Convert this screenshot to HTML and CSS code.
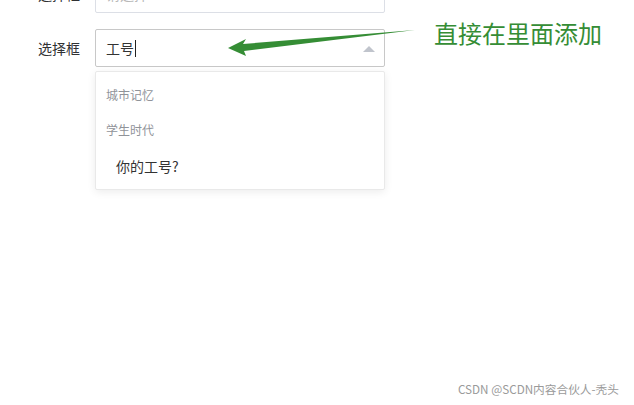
FILE: index.html
```html
<!DOCTYPE html>
<html lang="zh-CN">
<head>
  <meta charset="UTF-8" />
  <title>选择框</title>
  <link rel="stylesheet" href="styles.css">
</head>
<body>
  <div class="form">
    <div class="form-item">
      <label class="form-label">选择框</label>
      <div class="select">
        <div class="select-input">
          <span class="placeholder">请选择</span>
        </div>
      </div>
    </div>

    <div class="form-item">
      <label class="form-label">选择框</label>
      <div class="select">
        <div class="select-input is-focus">
          <span class="value">工号</span><span class="cursor"></span>
          <span class="caret"></span>
        </div>

        <!-- dropdown -->
        <div class="dropdown">
          <div class="group">
            <div class="group-title">城市记忆</div>
          </div>
          <div class="group last">
            <div class="group-title">学生时代</div>
          </div>
          <div class="option">你的工号?</div>
        </div>
      </div>
    </div>
  </div>

  <div class="note">直接在里面添加</div>
  <svg class="arrow" width="634" height="405" viewBox="0 0 634 405">
    <polygon points="228,48 246,39 243,44 415,30 244,51 246,56" fill="#358d35" />
  </svg>

  <div class="watermark">CSDN @SCDN内容合伙人-秃头</div>
</body>
</html>
```

FILE: styles.css
```css
* {
  box-sizing: border-box;
}

body {
  margin: 0;
  font-family: "Noto Sans CJK SC", "Liberation Sans", sans-serif;
  background: #fff;
  color: #606266;
  font-size: 14px;
  height: 405px;
  overflow: hidden;
  position: relative;
}

.form {
  margin-top: -25px;
}

.form-item {
  display: flex;
  align-items: center;
  margin-bottom: 16px;
}

.form-label {
  width: 95px;
  padding-right: 15px;
  text-align: right;
  color: #303133;
  font-size: 14px;
}

.select {
  position: relative;
  width: 290px;
}

.select-input {
  height: 38px;
  border: 1px solid #dcdfe6;
  border-radius: 2px;
  display: flex;
  align-items: center;
  padding: 0 10px;
  position: relative;
  font-size: 14px;
}

.select-input.is-focus {
  border-color: #c8c8c8;
}

.placeholder {
  color: #b8b8b8;
}

.value {
  color: #333;
}

.cursor {
  width: 1px;
  height: 17px;
  background: #222;
  margin-left: 1px;
}

.caret {
  position: absolute;
  right: 9px;
  top: 16px;
  width: 0;
  height: 0;
  border-left: 6px solid transparent;
  border-right: 6px solid transparent;
  border-bottom: 6px solid #c0c4cc;
}

/* dropdown */
.dropdown {
  position: absolute;
  top: calc(100% + 4px);
  left: 0;
  width: 290px;
  height: 119px;
  background: #fff;
  border: 1px solid #e9e9e9;
  border-radius: 2px;
  box-shadow: 0 2px 8px rgba(0, 0, 0, 0.08);
  padding-top: 8px;
}

.group {
  padding-bottom: 5px;
}

.group.last {
  padding-bottom: 4px;
}

.group-title {
  height: 30px;
  line-height: 30px;
  padding-left: 10px;
  font-size: 12px;
  color: #909399;
}

.option {
  height: 34px;
  line-height: 34px;
  padding-left: 20px;
  font-size: 14px;
  color: #333;
}

.note {
  position: absolute;
  left: 434px;
  top: 17px;
  font-size: 24px;
  color: #358d35;
  line-height: 32px;
}

.arrow {
  position: absolute;
  left: 0;
  top: 0;
}

.watermark {
  position: absolute;
  right: 15px;
  bottom: 8px;
  font-size: 11.7px;
  color: #9a9a9a;
  line-height: 16px;
}
```
